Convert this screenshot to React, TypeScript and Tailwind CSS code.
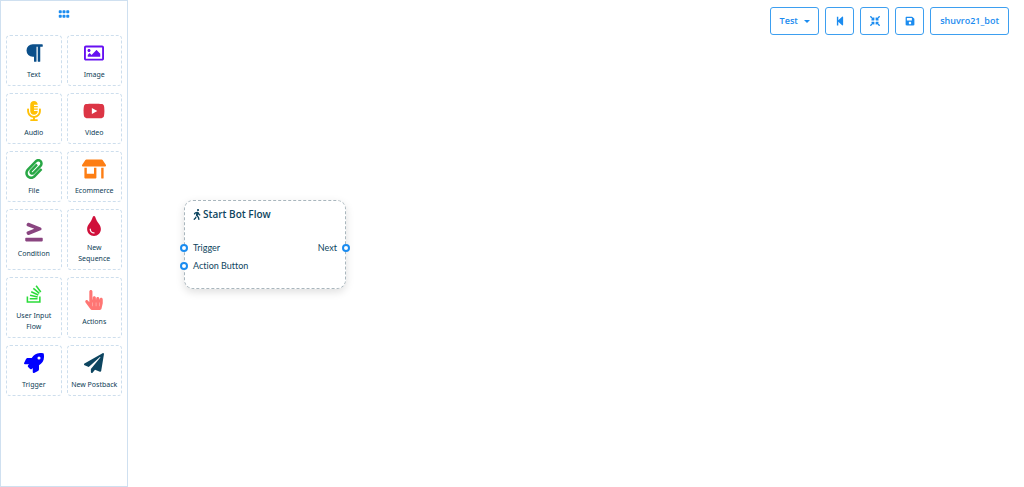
import type { IconType } from "react-icons";
import {
  FaCompressArrowsAlt,
  FaGreaterThanEqual,
  FaGripHorizontal,
  FaHandPointer,
  FaMicrophoneAlt,
  FaPaperPlane,
  FaPaperclip,
  FaParagraph,
  FaRegImage,
  FaRocket,
  FaSave,
  FaStackOverflow,
  FaStepBackward,
  FaStoreAlt,
  FaTint,
  FaWalking,
  FaYoutube,
} from "react-icons/fa";

interface Block {
  label: string;
  icon: IconType;
  style: string;
}

const blocks: Block[] = [
  { label: "Text", icon: FaParagraph, style: "w-5 text-[#0b4f8a]" },
  { label: "Image", icon: FaRegImage, style: "w-5 text-[#6610f2]" },
  { label: "Audio", icon: FaMicrophoneAlt, style: "w-5 text-[#ffc107]" },
  { label: "Video", icon: FaYoutube, style: "w-[22px] text-[#dc3545]" },
  { label: "File", icon: FaPaperclip, style: "w-5 text-[#28a745]" },
  { label: "Ecommerce", icon: FaStoreAlt, style: "w-6 text-[#fd7e14]" },
  { label: "Condition", icon: FaGreaterThanEqual, style: "w-5 text-[#8a4580]" },
  { label: "New Sequence", icon: FaTint, style: "w-5 text-[#d0103a]" },
  { label: "User Input Flow", icon: FaStackOverflow, style: "w-5 text-[#2bdc3a]" },
  { label: "Actions", icon: FaHandPointer, style: "w-5 text-[#ff7674]" },
  { label: "Trigger", icon: FaRocket, style: "w-5 text-[#0000ff]" },
  { label: "New Postback", icon: FaPaperPlane, style: "w-5 text-[#0d4560]" },
];

const toolButton =
  "flex h-7 items-center justify-center rounded-[3px] border border-[#3d9ff0] bg-white text-[#1b8cf0]";

const Sidebar = () => (
  <aside className="w-32 shrink-0 border border-[#cfe0f0] bg-white px-[5px]">
    <div className="flex h-[34px] justify-center pt-[7px]">
      <button aria-label="Toggle blocks" className="h-3 text-[#1b8cf0]">
        <FaGripHorizontal size={12} />
      </button>
    </div>
    <div className="grid grid-cols-2 gap-x-[5px] gap-y-[7px]">
      {blocks.map(({ label, icon: Icon, style }) => (
        <button
          key={label}
          className="flex min-h-[51px] flex-col items-center justify-center gap-[6px] rounded-[4px] border border-dashed border-[#cddeed] pt-[6px] pb-[5px] text-[7px] leading-[11px] text-[#0d3d56]"
        >
          <Icon className={`h-5 shrink-0 ${style}`} />
          <span className="px-[3px]">{label}</span>
        </button>
      ))}
    </div>
  </aside>
);

const Toolbar = () => (
  <header className="flex justify-end gap-[6px] pt-[7px] pr-[15px] font-['Open_Sans','Noto_Sans',sans-serif] text-[9px] font-semibold">
    <button className={`${toolButton} w-[49px] gap-[6px]`}>
      Test
      <span className="border-x-[3px] border-t-[3px] border-x-transparent border-t-[#1b8cf0]" />
    </button>
    <button aria-label="Back to start" className={`${toolButton} w-[29px]`}>
      <FaStepBackward size={10} />
    </button>
    <button aria-label="Fit to screen" className={`${toolButton} w-[29px]`}>
      <FaCompressArrowsAlt size={10} />
    </button>
    <button aria-label="Save" className={`${toolButton} w-[29px]`}>
      <FaSave size={10} />
    </button>
    <button className={`${toolButton} px-[9px]`}>shuvro21_bot</button>
  </header>
);

const Socket = ({ side }: { side: "left" | "right" }) => (
  <span
    className={`absolute top-[5px] h-2 w-2 rounded-full border-2 border-[#1b8cf0] bg-white ${
      side === "left" ? "-left-[13px]" : "-right-[13px]"
    }`}
  />
);

const StartNode = () => (
  <section className="absolute top-[200px] left-[56px] w-[162px] rounded-[9px] border border-dashed border-[#a9b6bd] bg-white px-2 pt-[5px] pb-[13px] text-[#0d4560] shadow-[0_3px_8px_rgba(0,0,0,0.13)]">
    <h2 className="flex items-center gap-[2px] font-['Open_Sans','Noto_Sans',sans-serif] text-[10px] leading-4 font-semibold">
      <FaWalking className="h-[11px] w-2" />
      Start Bot Flow
    </h2>
    <div className="mt-[17px] font-['Lato','Noto_Sans',sans-serif] text-[9px] leading-[18px] [font-variant-ligatures:none]">
      <div className="relative flex justify-between">
        <Socket side="left" />
        <span>Trigger</span>
        <span>Next</span>
        <Socket side="right" />
      </div>
      <div className="relative">
        <Socket side="left" />
        Action Button
      </div>
    </div>
  </section>
);

export default function App() {
  return (
    <div className="flex min-h-screen bg-white font-['Noto_Sans','Open_Sans',sans-serif]">
      <Sidebar />
      <main className="relative flex-1">
        <Toolbar />
        <StartNode />
      </main>
    </div>
  );
}
